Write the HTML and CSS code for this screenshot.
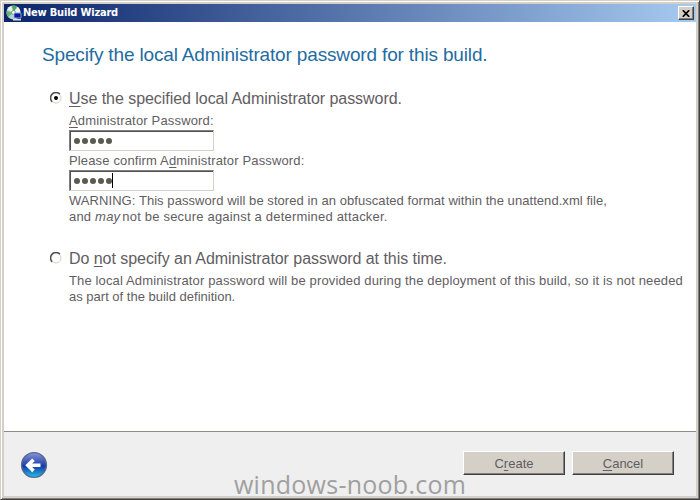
FILE: index.html
```html
<!DOCTYPE html>
<html lang="en">
<head>
<meta charset="utf-8">
<title>New Build Wizard</title>
<link rel="stylesheet" href="styles.css">
</head>
<body>
<div class="window">
  <header class="titlebar">
    <svg class="app-icon" width="16" height="16" viewBox="0 0 16 16">
      <circle cx="7.5" cy="7.5" r="7" fill="#b9d2c5"/>
      <path d="M7.5 7.5 1 4.5A7 7 0 0 1 5 1Z" fill="#e4eee8"/>
      <path d="M7.5 7.5 6 .6A7 7 0 0 1 11 1.4Z" fill="#48a766"/>
      <path d="M7.5 7.5 .8 6A7 7 0 0 0 2 12Z" fill="#64b77b"/>
      <path d="M7.5 7.5 12 2A7 7 0 0 1 14.4 7Z" fill="#f0f5f2"/>
      <circle cx="7.5" cy="7.5" r="2" fill="#fff" stroke="#6a8177" stroke-width=".7"/>
      <path d="M8 8h7v5H8z" fill="#0818a8" stroke="#a9c5d5" stroke-width=".8"/>
      <path d="M7 14h8v1.5H7z" fill="#d9e2e4"/>
    </svg>
    <h1 class="title">New Build Wizard</h1>
    <button class="close" aria-label="Close"><svg width="8" height="7" viewBox="0 0 8 7"><path d="m.8.2 6.4 6.6M7.2.2.8 6.8" stroke="#000" stroke-width="1.7"/></svg></button>
  </header>
  <main class="content">
    <h2 class="heading">Specify the local Administrator password for this build.</h2>
    <section class="option">
      <svg class="radio" width="12" height="12" viewBox="0 0 12 12"><circle cx="6" cy="6" r="5" fill="#fff" stroke="#d4d0c8"/><path d="M2.1 9.9A5.4 5.4 0 0 1 9.9 2.1" fill="none" stroke="#505050" stroke-width="1.5"/><circle cx="6" cy="6" r="2" fill="#000"/></svg>
      <div class="option-body">
        <p class="option-title use"><u>U</u>se the specified local Administrator password.</p>
        <p class="label first"><u>A</u>dministrator Password:</p>
        <div class="field"><i></i><i></i><i></i><i></i><i></i></div>
        <p class="label second">Please confirm A<u>d</u>ministrator Password:</p>
        <div class="field"><i></i><i></i><i></i><i></i><i></i><b class="caret"></b></div>
        <p class="note warn1">WARNING: This password will be stored in an obfuscated format within the unattend.xml file,</p>
        <p class="note warn2">and <em>may</em>not be secure against a determined attacker.</p>
      </div>
    </section>
    <section class="option">
      <svg class="radio" width="12" height="12" viewBox="0 0 12 12"><circle cx="6" cy="6" r="5" fill="#fff" stroke="#d4d0c8"/><path d="M2.1 9.9A5.4 5.4 0 0 1 9.9 2.1" fill="none" stroke="#505050" stroke-width="1.5"/></svg>
      <div class="option-body">
        <p class="option-title skip">Do <u>n</u>ot specify an Administrator password at this time.</p>
        <p class="note info1">The local Administrator password will be provided during the deployment of this build, so it is not needed</p>
        <p class="note info2">as part of the build definition.</p>
      </div>
    </section>
  </main>
  <footer class="footer">
    <svg class="back" width="28" height="28" viewBox="0 0 28 28">
      <defs><linearGradient id="orb" x1="0" y1="0" x2="0" y2="1"><stop offset="0" stop-color="#8497d6"/><stop offset=".42" stop-color="#3450b5"/><stop offset=".55" stop-color="#1439a8"/><stop offset="1" stop-color="#23c5e8"/></linearGradient></defs>
      <circle cx="14" cy="14" r="12.4" fill="url(#orb)" stroke="#56698c" stroke-width="1.4"/>
      <path d="M13.5 8.7 7.8 14.3l5.7 5.6M8.5 14.3h12" fill="none" stroke="#fff" stroke-width="3.6"/>
    </svg>
    <div class="watermark">windows-noob.com</div>
    <div class="actions">
      <button class="btn">C<u>r</u>eate</button>
      <button class="btn"><u>C</u>ancel</button>
    </div>
  </footer>
</div>
</body>
</html>
```
FILE: styles.css
```css
* { box-sizing: border-box; }
body { margin: 0; font-family: "Liberation Sans", Arial, sans-serif; color: #625d62; }
h1, h2, p { margin: 0; font-weight: normal; white-space: nowrap; }
u { text-decoration-thickness: 1px; text-underline-offset: 2px; text-decoration-skip-ink: none; }
.window {
  width: 700px; height: 500px; padding: 3px;
  display: flex; flex-direction: column;
  background: #d4d0c8;
  border: 1px solid; border-color: #d4d0c8 #404040 #404040 #d4d0c8;
  box-shadow: inset 1px 1px #fff, inset -1px -1px #808080;
}
.titlebar {
  height: 18px; flex: none; display: flex; align-items: center; padding: 0 2px;
  background: linear-gradient(90deg, #0a246a, #a6caf0);
}
.app-icon { flex: none; }
.title { margin-left: 1px; flex: 1; font: bold 11px/18px "DejaVu Sans Condensed", "DejaVu Sans", sans-serif; letter-spacing: -.2px; color: #fff; }
.close {
  width: 16px; height: 14px; padding: 0; display: flex; align-items: center; justify-content: center;
  background: #d4d0c8; border: 1px solid; border-color: #fff #404040 #404040 #fff;
  box-shadow: inset -1px -1px #808080;
}
.content { flex: 1; background: #fff; padding: 20px 0 0 38px; }
.heading { font-size: 19px; line-height: 26px; letter-spacing: -.155px; color: #1f6c9f; margin-bottom: 19px; }
.option { display: flex; padding-left: 8px; margin-bottom: 22px; }
.radio { flex: none; margin-top: 5px; }
.option-body { margin-left: 7px; }
.option-title { font-size: 16px; line-height: 24px; letter-spacing: -.05px; }
.label, .note { font-size: 13px; line-height: 16px; }
.label { padding-top: 2px; height: 19px; }
.label.first { letter-spacing: .17px; }
.label.second { letter-spacing: .15px; }
.field {
  width: 145px; height: 21px; padding: 2px 0 0 4px; display: flex; gap: 2px;
  background: #fff; border: 1px solid; border-color: #808080 #d4d0c8 #d4d0c8 #808080;
  box-shadow: inset 1px 1px #505050;
}
.field i { width: 6px; height: 6px; border-radius: 50%; background: #5a5a50; margin-top: 5px; }
.caret { width: 1px; height: 15px; margin-left: -2px; background: #000; }
.warn1 { margin-top: 2px; letter-spacing: .06px; }
.warn2 { letter-spacing: .2px; }
.warn2 em { margin-right: 2px; }
.info1 { margin-top: 2px; letter-spacing: .14px; }
.footer {
  height: 65px; flex: none; display: flex; position: relative;
  background: #efefef; border-top: 1px solid #8c8c84; padding: 19px 22px 0 16px; justify-content: space-between;
}
.watermark { position: absolute; left: 230px; top: 38px; font: 25px/28px "Open Sans", "Noto Sans", sans-serif; letter-spacing: .25px; color: #a0a0a0; white-space: nowrap; }
.actions { display: flex; gap: 7px; }
.btn {
  width: 102px; height: 24px; padding: 0; color: #625d62; font: 13px "Liberation Sans", Arial, sans-serif;
  background: #d4d0c8; border: 1px solid; border-color: #fff #404040 #404040 #fff;
  box-shadow: inset -1px -1px #808080;
}
```
